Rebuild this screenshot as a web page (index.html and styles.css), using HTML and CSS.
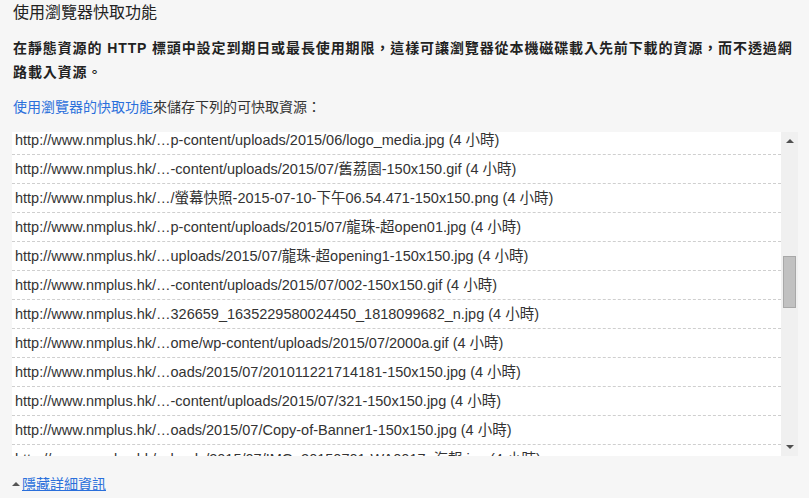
FILE: index.html
```html
<!DOCTYPE html>
<html lang="zh-Hant">
<head>
  <meta charset="UTF-8" />
  <title>使用瀏覽器快取功能</title>
  <link rel="stylesheet" href="styles.css">
</head>
<body>
  <div class="rule">
    <h2 class="title">使用瀏覽器快取功能</h2>
    <p class="summary">在靜態資源的 HTTP 標頭中設定到期日或最長使用期限，這樣可讓瀏覽器從本機磁碟載入先前下載的資源，而不透過網路載入資源。</p>
    <p class="lead"><a href="#">使用瀏覽器的快取功能</a>來儲存下列的可快取資源：</p>

    <div class="urlbox">
      <div class="urls">
        <ul class="url-list">
          <li>http://www.nmplus.hk/…p-content/uploads/2015/06/logo_media.jpg (4 小時)</li>
          <li>http://www.nmplus.hk/…-content/uploads/2015/07/舊荔園-150x150.gif (4 小時)</li>
          <li>http://www.nmplus.hk/…/螢幕快照-2015-07-10-下午06.54.471-150x150.png (4 小時)</li>
          <li>http://www.nmplus.hk/…p-content/uploads/2015/07/龍珠-超open01.jpg (4 小時)</li>
          <li>http://www.nmplus.hk/…uploads/2015/07/龍珠-超opening1-150x150.jpg (4 小時)</li>
          <li>http://www.nmplus.hk/…-content/uploads/2015/07/002-150x150.gif (4 小時)</li>
          <li>http://www.nmplus.hk/…326659_1635229580024450_1818099682_n.jpg (4 小時)</li>
          <li>http://www.nmplus.hk/…ome/wp-content/uploads/2015/07/2000a.gif (4 小時)</li>
          <li>http://www.nmplus.hk/…oads/2015/07/201011221714181-150x150.jpg (4 小時)</li>
          <li>http://www.nmplus.hk/…-content/uploads/2015/07/321-150x150.jpg (4 小時)</li>
          <li>http://www.nmplus.hk/…oads/2015/07/Copy-of-Banner1-150x150.jpg (4 小時)</li>
          <li>http://www.nmplus.hk/…loads/2015/07/IMG_20150701-WA0017_海報.jpg (4 小時)</li>
        </ul>
      </div>
      <div class="scrollbar">
        <span class="arrow up"></span>
        <div class="track">
          <div class="thumb"></div>
        </div>
        <span class="arrow down"></span>
      </div>
    </div>

    <a href="#" class="toggle"><span class="caret"></span>隱藏詳細資訊</a>
  </div>
</body>
</html>
```

FILE: styles.css
```css
body {
  margin: 0;
  background: #f6f6f6;
  font-family: "Liberation Sans", Arial, "Noto Sans CJK TC", sans-serif;
  color: #333;
}

.rule {
  padding: 3px 11px 0 13px;
}

.title {
  margin: 0;
  font-size: 16px;
  line-height: 20px;
  font-weight: normal;
  color: #222;
}

.summary {
  margin: 13px -6px 0 0;
  font-size: 14px;
  line-height: 24px;
  letter-spacing: 0.9px;
  font-weight: bold;
  color: #222;
}

.lead {
  margin: 13px 0 0;
  font-size: 14px;
  line-height: 20px;
  color: #333;
}

.lead a {
  color: #2a6fdb;
  text-decoration: none;
}

.urlbox {
  display: flex;
  margin: 15px 0 0 -1px;
  height: 324px;
  background: #fff;
}

.urls {
  flex: 1;
  overflow: hidden;
}

.url-list {
  list-style: none;
  margin: -6px 0 0;
  padding: 0;
}

.url-list li {
  height: 28px;
  line-height: 28px;
  padding-left: 3px;
  font-size: 14.5px;
  white-space: nowrap;
  border-bottom: 1px dashed #cfcfcf;
  color: #333;
}

.scrollbar {
  width: 17px;
  background: #f0f0f0;
  display: flex;
  flex-direction: column;
  align-items: center;
}

.arrow {
  width: 0;
  height: 0;
  border-left: 4px solid transparent;
  border-right: 4px solid transparent;
}

.arrow.up {
  margin-top: 7px;
  border-bottom: 4px solid #505050;
}

.arrow.down {
  margin-bottom: 7px;
  border-top: 4px solid #505050;
}

.track {
  flex: 1;
  align-self: stretch;
  padding-top: 113px;
}

.thumb {
  margin: 0 2px;
  height: 50px;
  background: #c1c1c1;
  border: 1px solid #a8a8a8;
}

.toggle {
  display: inline-block;
  margin-top: 18px;
  margin-left: -1px;
  font-size: 14px;
  line-height: 20px;
  color: #2a6fdb;
  text-decoration: underline;
}

.caret {
  display: inline-block;
  width: 0;
  height: 0;
  margin-right: 2px;
  vertical-align: 3px;
  border-left: 4px solid transparent;
  border-right: 4px solid transparent;
  border-bottom: 4px solid #555;
}
```
